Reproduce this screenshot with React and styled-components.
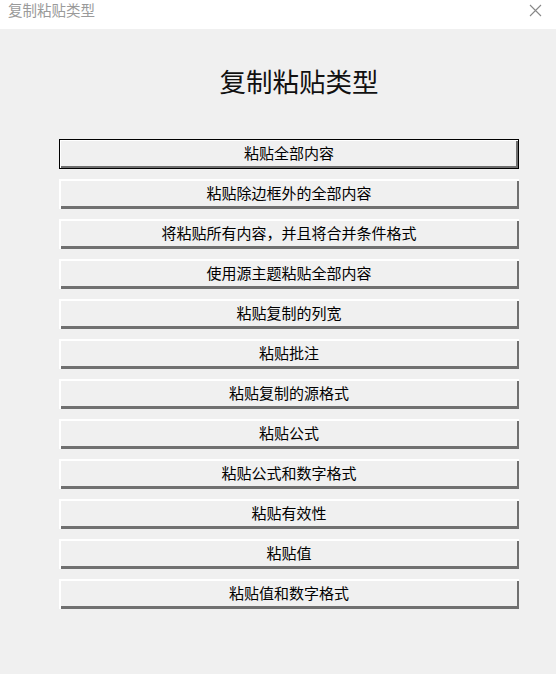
import React from "react";
import styled, { createGlobalStyle } from "styled-components";

const Global = createGlobalStyle`
  html, body { margin: 0; padding: 0; background: #f0f0f0; }
  body { font-family: "Noto Sans CJK SC", "Noto Sans", sans-serif; }
`;

const Window = styled.div`
  width: 556px;
  height: 674px;
  display: flex;
  flex-direction: column;
  background: #f0f0f0;
  overflow: hidden;
`;

const TitleBar = styled.div`
  height: 29px;
  flex: 0 0 29px;
  background: #ffffff;
  display: flex;
  align-items: center;
  justify-content: space-between;
  padding: 0 14px 0 8px;
  box-sizing: border-box;
`;

const TitleText = styled.span`
  font-size: 14.5px;
  color: #9a9a9a;
  line-height: 1;
  margin-top: -9px;
`;

const CloseIcon = styled.svg`
  width: 13px;
  height: 13px;
  margin-top: -9px;
`;

const Body = styled.div`
  flex: 1;
  display: flex;
  flex-direction: column;
  padding: 35px 0 0 59px;
`;

const Heading = styled.h1`
  margin: 0 0 41px 0;
  width: 460px;
  padding-left: 20px;
  box-sizing: border-box;
  text-align: center;
  font-size: 26.5px;
  font-weight: 400;
  line-height: 34px;
  color: #111;
`;

const ButtonList = styled.div`
  display: flex;
  flex-direction: column;
  gap: 10px;
`;

const Button = styled.button`
  width: 460px;
  height: 30px;
  box-sizing: border-box;
  padding: 0 0 3px 0;
  margin: 0;
  background: #f0f0f0;
  font-family: "Noto Sans CJK SC", "Noto Sans", sans-serif;
  font-size: 15px;
  color: #000;
  border: ${(p) => (p.$default ? "1px solid #000" : "none")};
  box-shadow: ${(p) =>
    p.$default
      ? "inset 1px 1px 0 #ffffff, inset -2px -2px 0 #6e6e6e"
      : "inset 2px 2px 0 #ffffff, inset -2px -3px 0 #707070"};
  display: flex;
  align-items: center;
  justify-content: center;
  line-height: 1;
  cursor: default;
`;

const items = [
  "粘贴全部内容",
  "粘贴除边框外的全部内容",
  "将粘贴所有内容，并且将合并条件格式",
  "使用源主题粘贴全部内容",
  "粘贴复制的列宽",
  "粘贴批注",
  "粘贴复制的源格式",
  "粘贴公式",
  "粘贴公式和数字格式",
  "粘贴有效性",
  "粘贴值",
  "粘贴值和数字格式",
];

export default function App() {
  return (
    <>
      <Global />
      <Window>
        <TitleBar>
          <TitleText>复制粘贴类型</TitleText>
          <CloseIcon viewBox="0 0 13 13">
            <path d="M1 1 L12 12 M12 1 L1 12" stroke="#888" strokeWidth="1.1" fill="none" />
          </CloseIcon>
        </TitleBar>
        <Body>
          <Heading>复制粘贴类型</Heading>
          <ButtonList>
            {items.map((t, i) => (
              <Button key={t} $default={i === 0}>
                {t}
              </Button>
            ))}
          </ButtonList>
        </Body>
      </Window>
    </>
  );
}
